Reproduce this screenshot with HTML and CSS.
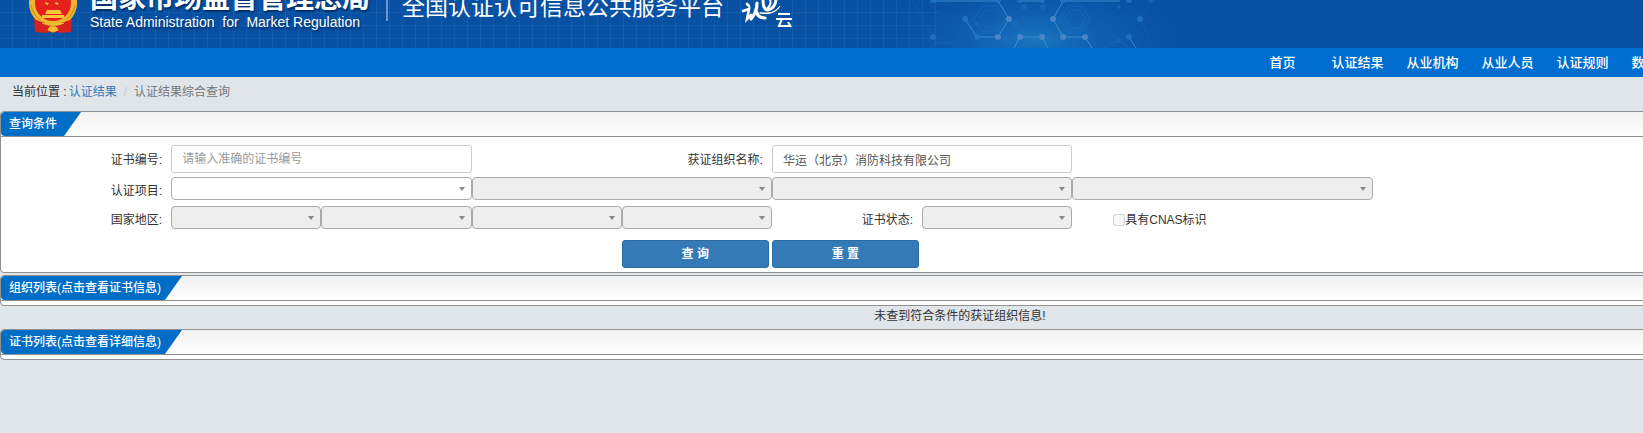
FILE: index.html
```html
<!DOCTYPE html>
<html lang="zh-CN">
<head>
<meta charset="utf-8">
<title>全国认证认可信息公共服务平台</title>
<link rel="stylesheet" href="styles.css">
</head>
<body>
<div class="page">
  <header class="banner">
    <svg class="molecules" width="360" height="48" viewBox="0 0 360 48" aria-hidden="true">
      <defs>
        <radialGradient id="glow"><stop offset="0" stop-color="#1c7cc0" stop-opacity=".85"/><stop offset="1" stop-color="#1060c0" stop-opacity="0"/></radialGradient>
      </defs>
      <ellipse cx="155" cy="40" rx="150" ry="60" fill="url(#glow)"/>
      <g fill="none" stroke="#2a7ccb" stroke-opacity=".35">
        <path d="M93 19l10-13h14l9 13-9 13h-14zM179 19l10-13h13l8 13-8 13h-13zM184 19l7-9h9l6 9-6 9h-9zM140 48l6-6h12l6 6M225 48l6-6h12l6 6M50 48l6-5h14l6 5"/>
        <path d="M32 0l21 37M260 19l12 26M260 19l11-18M99 19l7-9h9l6 9-6 9h-9z" stroke-opacity=".2"/>
      </g>
      <g fill="none" stroke="#4b9fd8" stroke-opacity=".7">
        <path d="M53 1h65l11 18-11 18H97L85 19M240 1h-57l-10 18 10 18h22l7 11M134 48l6-11h22l6 11M249 37l7 11M140 1h22"/>
      </g>
      <g fill="#2176c8" fill-opacity=".8">
        <circle cx="53" cy="37" r="3"/><circle cx="53" cy="0" r="3"/><circle cx="85" cy="19" r="3"/><circle cx="97" cy="37" r="3"/><circle cx="249" cy="37" r="3"/><circle cx="249" cy="0" r="3"/><circle cx="260" cy="19" r="3"/><circle cx="140" cy="0" r="3"/><circle cx="162" cy="0" r="3"/><circle cx="118" cy="0" r="3"/><circle cx="183" cy="0" r="3"/>
      </g>
      <g fill="#4a85c8">
        <circle cx="129" cy="19" r="3"/><circle cx="118" cy="37" r="3"/><circle cx="140" cy="37" r="3"/><circle cx="162" cy="37" r="3"/><circle cx="173" cy="19" r="3"/><circle cx="183" cy="37" r="3"/><circle cx="205" cy="37" r="3"/>
      </g>
      <g fill="#2474c8" fill-opacity=".4">
        <circle cx="135" cy="24" r="3"/><circle cx="125" cy="40" r="3"/><circle cx="144" cy="7" r="3"/><circle cx="163" cy="7" r="3"/><circle cx="239" cy="40" r="2"/><circle cx="239" cy="7" r="2"/><circle cx="271" cy="0" r="3"/><circle cx="97" cy="24" r="2"/>
      </g>
    </svg>
    <svg class="emblem" width="50" height="34" viewBox="0 0 50 34" aria-hidden="true">
      <path d="M6 17l1 15 11 1 7-3 7 3 11-1 1-15z" fill="#d8201c"/>
      <circle cx="25" cy="3" r="21" fill="#e6211d" stroke="#eeb62c" stroke-width="6"/>
      <path d="M3 5q2 10 9 15M47 5q-2 10-9 15" fill="none" stroke="#c98a1a" stroke-width="1"/>
      <path d="M19 10h13l2 4H17zM14 15h22v3H14z" fill="#f5c83c"/>
      <path d="M18 2l1 1 2 0-1 1 0 1-2-1-1 0zM28 2l1 1 2 0-1 1 0 1-2-1-1 0z" fill="#f9d23c"/>
      <path d="M8 20l9 3 8 3 8-3 9-3 1 5-10 2-3 4-5 2-5-2-3-4-10-2z" fill="#d8201c"/>
      <path d="M14 23q6 3 11 2 5 1 11-2M20 30q2-5 5-3 3-2 5 3l-5 2z" fill="#f0bd34" stroke="#f0bd34"/>
    </svg>
    <div class="agency">
      <span class="agency-cn">国家市场监督管理总局</span>
      <span class="agency-en">State Administration&nbsp; for&nbsp; Market Regulation</span>
    </div>
    <span class="divider"></span>
    <span class="platform">全国认证认可信息公共服务平台</span>
    <span class="logo" role="img" aria-label="认e云">
      <svg width="52" height="28" viewBox="0 0 52 28" fill="none" stroke="#fff" stroke-linecap="round" aria-hidden="true">
        <path d="M6 4l2 2M2 11l6-2-2 10 4-4" stroke-width="2.6"/>
        <path d="M16 3q0 9-6 16M15 10q1 8 9 8" stroke-width="3.2"/>
        <path d="M22 0q0 10 5 10 7-2 8-10" stroke-width="3"/>
        <path d="M29 0q2 4-3 9" stroke-width="2"/>
        <path d="M19 13q13 3 20-7-4 7-12 7z" fill="#fff" stroke-width="1"/>
        <path d="M37 14h12M35 19h16M41 19l-3 7h11M47 22l3 5" stroke-width="2" stroke-linecap="butt"/>
      </svg>
    </span>
  </header>

  <nav class="nav" aria-label="主导航">
    <a href="#">首页</a>
    <a href="#">认证结果</a>
    <a href="#">从业机构</a>
    <a href="#">从业人员</a>
    <a href="#">认证规则</a>
    <a href="#">数据统计</a>
  </nav>

  <div class="crumbs">
    <span>当前位置 :</span>
    <a href="#">认证结果</a>
    <span class="slash">/</span>
    <span class="current">认证结果综合查询</span>
  </div>

  <main>
    <section class="panel">
      <div class="panel-head"><h2 class="tab">查询条件</h2></div>
      <form class="form">
        <div class="row row-text">
          <label for="cert-no">证书编号:</label>
          <input class="field span2" id="cert-no" type="text" placeholder="请输入准确的证书编号">
          <label class="from-col5" for="org-name">获证组织名称:</label>
          <input class="field span2" id="org-name" type="text" value="华运（北京）消防科技有限公司">
        </div>
        <div class="row">
          <label for="item1">认证项目:</label>
          <select class="pick span2" id="item1"><option></option></select>
          <select class="pick span2" aria-label="认证项目二级" disabled><option></option></select>
          <select class="pick span2" aria-label="认证项目三级" disabled><option></option></select>
          <select class="pick span2" aria-label="认证项目四级" disabled><option></option></select>
        </div>
        <div class="row">
          <label for="area1">国家地区:</label>
          <select class="pick" id="area1" disabled><option></option></select>
          <select class="pick" aria-label="省" disabled><option></option></select>
          <select class="pick" aria-label="市" disabled><option></option></select>
          <select class="pick" aria-label="区县" disabled><option></option></select>
          <label for="status">证书状态:</label>
          <select class="pick" id="status" disabled><option></option></select>
          <div class="check">
            <input type="checkbox" id="cnas" disabled><label for="cnas">具有CNAS标识</label>
          </div>
        </div>
        <div class="row row-actions">
          <button class="btn from-col5" type="button">查 询</button>
          <button class="btn" type="reset">重 置</button>
        </div>
      </form>
    </section>

    <section class="panel panel-list">
      <div class="panel-head"><h2 class="tab">组织列表(点击查看证书信息)</h2></div>
    </section>
    <p class="message">未查到符合条件的获证组织信息!</p>
    <section class="panel panel-list">
      <div class="panel-head"><h2 class="tab">证书列表(点击查看详细信息)</h2></div>
    </section>
  </main>
</div>
</body>
</html>
```

FILE: styles.css
```css
* { box-sizing: border-box; }

html { overflow: hidden; }

body {
  margin: 0;
  background: #e0e5e9;
  color: #333;
  font: 12px/20px "Liberation Sans", "Noto Sans CJK SC", sans-serif;
}

.page { min-width: 1920px; }

a { text-decoration: none; }

/* Banner */
.banner {
  position: relative;
  display: flex;
  align-items: flex-start;
  height: 48px;
  padding-left: 28px;
  overflow: hidden;
  color: #fff;
  background: #0850a2;
}

.banner::before {
  content: "";
  position: absolute;
  inset: 0 auto 0 0;
  width: 940px;
  background:
    repeating-linear-gradient(90deg, transparent 0 12px, rgba(40, 120, 200, .25) 12px 13px),
    repeating-linear-gradient(180deg, transparent 0 12px, rgba(40, 120, 200, .25) 12px 13px);
}

.banner > * { position: relative; flex: none; }

.banner .molecules {
  position: absolute;
  top: 0;
  left: 880px;
}

.agency {
  display: flex;
  flex-direction: column;
  margin: -15px 16px 0 12px;
  text-shadow: 1px 2px 2px rgba(0, 20, 60, .6);
}

.agency-cn {
  font-size: 28px;
  font-weight: 700;
  line-height: 28px;
}

.agency-en {
  font-size: 14px;
  line-height: 18px;
}

.divider {
  width: 2px;
  height: 21px;
  margin-right: 14px;
  background: #6c98cb;
}

.platform {
  margin: -9px 17px 0 0;
  font-size: 23px;
  line-height: 32px;
}

/* Navigation */
.nav {
  display: flex;
  justify-content: flex-end;
  padding-right: 225px;
  background: #006dd1;
}

.nav a {
  width: 75px;
  color: #fff;
  font-size: 13px;
  font-weight: 500;
  line-height: 29px;
  text-align: center;
}

/* Breadcrumb */
.crumbs {
  display: flex;
  gap: 2px;
  padding: 5px 12px 9px;
}

.crumbs a { color: #337ab7; }
.crumbs .slash { padding: 0 5px; color: #ccc; }
.crumbs .current { color: #777; }

/* Panels */
.panel {
  margin-bottom: 2px;
  border: 1px solid #909090;
  border-radius: 4px;
  background: #fff;
}

.panel-head {
  display: flex;
  border-bottom: 1px solid #909090;
  border-radius: 4px 4px 0 0;
  background: linear-gradient(#f1f1f1, #fff);
}

.tab {
  margin: 0;
  padding: 0 24px 0 8px;
  border-radius: 4px 0 0 4px;
  background: #006dc7;
  color: #fff;
  clip-path: polygon(0 0, 100% 0, calc(100% - 17px) 100%, 0 100%);
  font-size: 12px;
  font-weight: 500;
  line-height: 24px;
}

.panel-list { padding-bottom: 4px; margin-bottom: 0; }
.panel-list .tab { padding-right: 21px; }

.message {
  margin: 0;
  padding-bottom: 3px;
  text-align: center;
}

/* Query form */
.form { padding: 8px 5% 4px 20px; }

.row {
  display: grid;
  grid-template-columns: repeat(12, 1fr);
  align-items: start;
}

.row-text { margin-bottom: 2px; }
.row-actions { padding-top: 5px; }
.span2 { grid-column-end: span 2; }
.from-col5 { grid-column-start: 5; }

.row > label {
  padding-right: 9px;
  line-height: 29px;
  text-align: right;
}

.row-text > label { line-height: 30px; }

.field {
  width: 100%;
  height: 28px;
  padding: 0 10px;
  border: 1px solid #ccc;
  border-radius: 3px;
  background: #fff;
  color: #555;
  font: inherit;
}

.field::placeholder { color: #999; }

.pick {
  width: 100%;
  height: 23px;
  border: 1px solid #aaa;
  border-radius: 4px;
  appearance: none;
  background: #fff url("data:image/svg+xml,%3Csvg xmlns='http://www.w3.org/2000/svg' width='6' height='4'%3E%3Cpath d='M0 0h6L3 4z' fill='%23888'/%3E%3C/svg%3E") no-repeat right 6px center;
  font: inherit;
}

.pick:disabled { background-color: #eee; opacity: 1; }

.check {
  display: flex;
  align-items: flex-start;
  grid-column-end: span 2;
  padding-left: 41px;
  line-height: 29px;
}

.check input {
  width: 12px;
  height: 12px;
  margin: 8px 0 0;
}

.btn {
  height: 28px;
  margin-right: 3px;
  border: 1px solid #2e6da4;
  border-radius: 3px;
  background: #337ab7;
  color: #fff;
  font: inherit;
  font-weight: 700;
}
```
